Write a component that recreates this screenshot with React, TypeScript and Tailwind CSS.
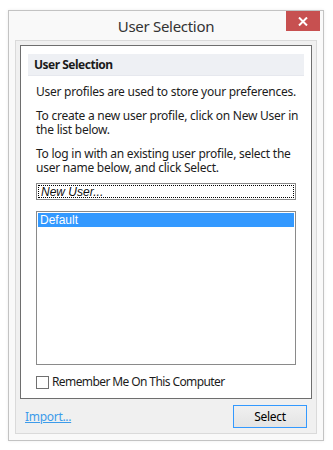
import React from "react";

const ui = { fontFamily: '"Noto Sans", "Open Sans", sans-serif' };
const arial = { fontFamily: '"Liberation Sans", Arial, sans-serif' };

export default function App() {
  return (
    <div className="min-h-[450px] w-[333px] bg-white pt-[10px] pl-[8px]" style={ui}>
      {/* Window */}
      <div className="flex h-[431px] w-[316px] flex-col border border-[#c3c3c3] bg-[#f9f9f9] shadow-[0_0_3px_rgba(0,0,0,0.08)]">
        {/* Title bar */}
        <div className="grid h-[29px] grid-cols-[37px_1fr_37px]">
          <div />
          <div className="flex items-center justify-center pt-[1px] text-[15px] tracking-[-0.3px] text-[#333]">
            User Selection
          </div>
          <div className="flex items-start">
            <div className="flex h-[20px] w-[34px] items-center justify-center bg-[#c75050]">
              <svg width="10" height="9" viewBox="0 0 10 9">
                <path d="M1 0.5 L9 8.5 M9 0.5 L1 8.5" stroke="#fff" strokeWidth="2" />
              </svg>
            </div>
          </div>
        </div>

        {/* Client area */}
        <div className="mx-[6px] mb-[6px] flex flex-1 flex-col border border-[#dadada] bg-[#f0f0f0] p-[4px]">
          {/* Group box */}
          <div className="flex h-[354px] flex-col border border-[#6e6e6e] bg-white px-[7px] pt-[8px] tracking-[-0.25px]">
            <div className="flex h-[22px] items-center border-b border-[#e6e8ee] bg-[#eef0f4] pl-[6px] text-[12px] font-bold tracking-[-0.5px] text-[#1a1a1a]">
              User Selection
            </div>
            <div className="flex flex-col px-[8px] text-[12px] leading-[14px] text-[#1c1c1c]">
              <p className="mt-[9px] whitespace-nowrap">User profiles are used to store your preferences.</p>
              <p className="mt-[10px] whitespace-nowrap">
                To create a new user profile, click on New User in
                <br />
                the list below.
              </p>
              <p className="mt-[10px] whitespace-nowrap">
                To log in with an existing user profile, select the
                <br />
                user name below, and click Select.
              </p>

              {/* New user input */}
              <div className="mt-[8px] flex h-[17px] items-stretch border border-[#8a8a8a] p-[1px] tracking-normal">
                <div
                  className="flex flex-1 items-center border border-dotted border-black pl-[2px] text-[12px] italic text-[#111]"
                  style={arial}
                >
                  New User...
                </div>
              </div>

              {/* User list */}
              <div className="mt-[11px] flex h-[154px] flex-col border border-[#8a8a8a] p-[1px] tracking-normal">
                <div className="flex h-[14px] items-center bg-[#3399ff] pl-[2px] text-[12px] text-white" style={arial}>
                  Default
                </div>
              </div>

              {/* Remember me */}
              <label className="mt-[10px] flex items-center gap-[3px]">
                <span className="h-[13px] w-[13px] border border-[#707070] bg-white" />
                <span className="text-[12px] tracking-[-0.6px] text-[#1c1c1c]">Remember Me On This Computer</span>
              </label>
            </div>
          </div>

          {/* Bottom row */}
          <div className="mt-[6px] flex items-center justify-between px-[5px] tracking-[-0.3px]">
            <a className="text-[12px] text-[#3c9bea] underline">Import...</a>
            <button className="h-[23px] w-[74px] border border-[#3399ff] bg-gradient-to-b from-[#f0f0f0] to-[#e4e4e4] text-[12px] text-black">
              Select
            </button>
          </div>
        </div>
      </div>
    </div>
  );
}
